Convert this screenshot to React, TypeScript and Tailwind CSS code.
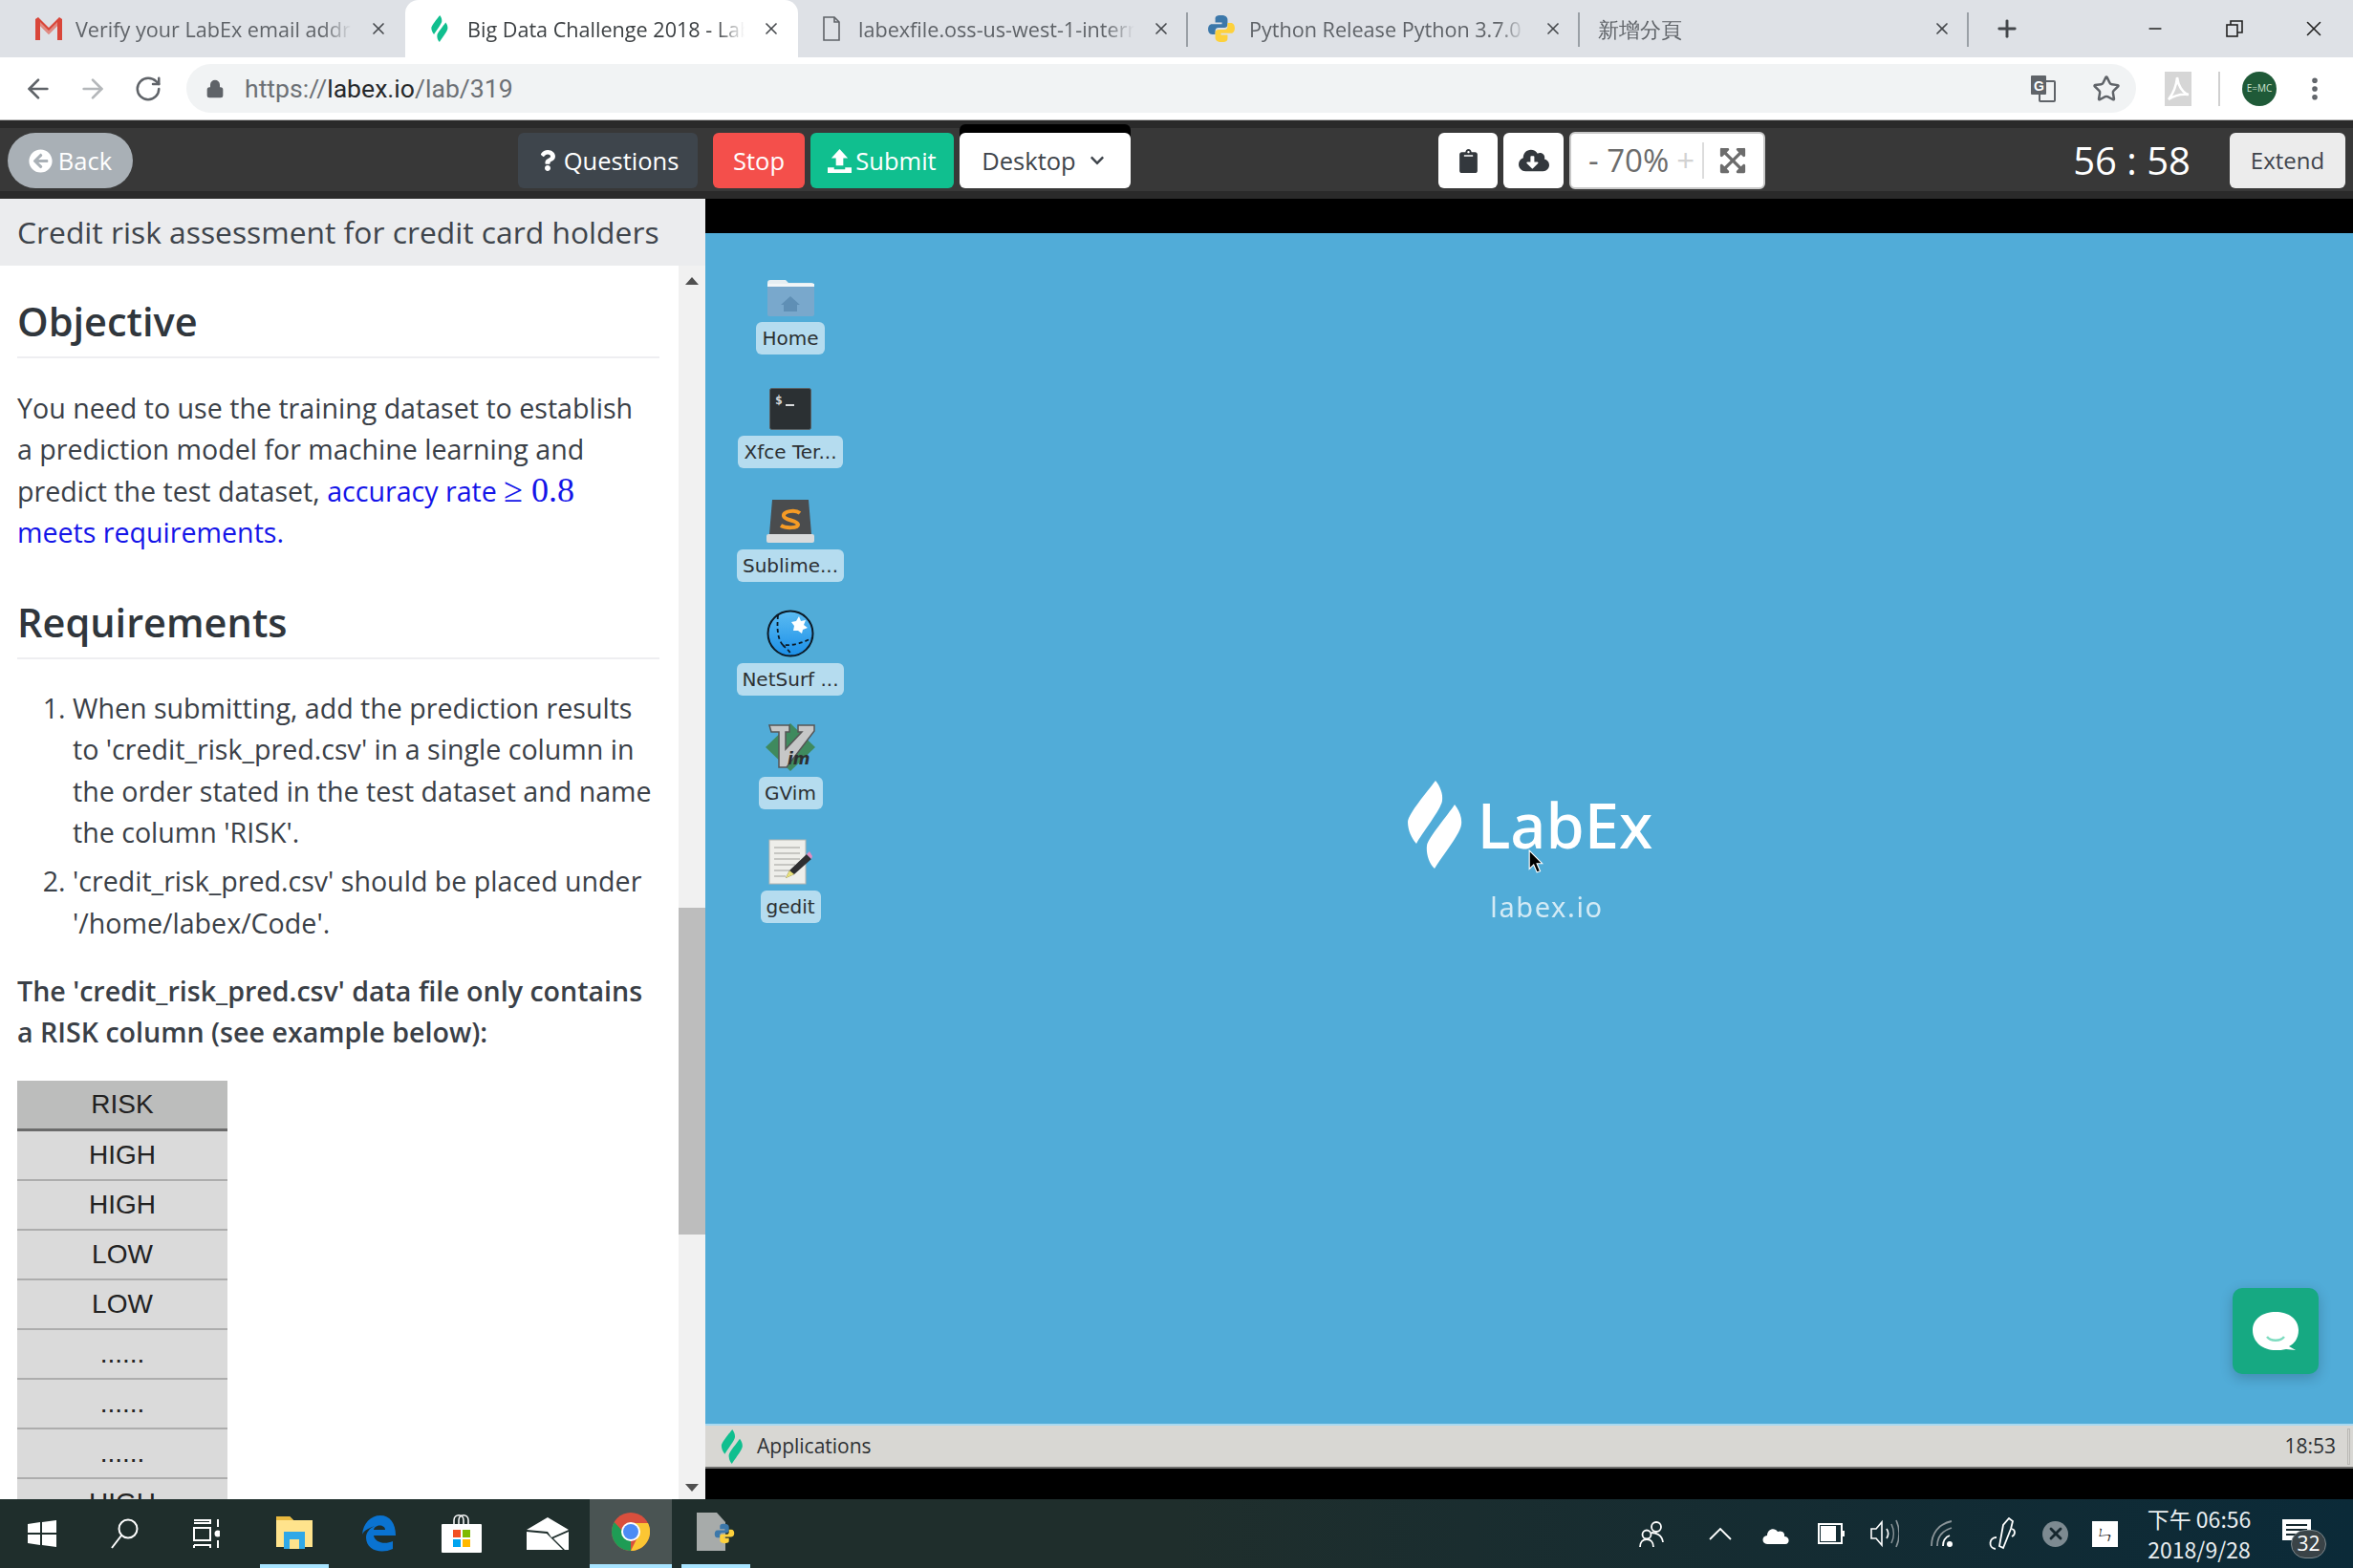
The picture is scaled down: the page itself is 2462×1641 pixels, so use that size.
import { ArrowLeft, ArrowRight, RotateCw, Lock, Star, EllipsisVertical, X, Plus, Minus } from "lucide-react";
import { FaArrowCircleLeft, FaQuestion, FaChevronDown, FaClipboard, FaCloudDownloadAlt, FaExpandArrowsAlt } from "react-icons/fa";

const LabexLeaf = ({ color, className }: { color: string; className: string }) => (
  <svg viewBox="0 0 57 92" className={className} fill={color}>
    <path d="M29 0C34 6 37 14 36 21C35 30 14 56 9 66C4 60 0 52 0 43C1 34 20 12 29 0Z" />
    <path d="M49 25C54 31 57 39 56 46C55 56 35 80 28 92C22 86 19 76 20 68C21 60 42 36 49 25Z" />
  </svg>
);

const GmailIcon = () => (
  <svg viewBox="0 0 28 24" className="w-[28px] h-[24px]">
    <path d="M0 2L3 0L14 11L25 0L28 2V24H23V9L14 18L5 9V24H0Z" fill="#d9463a" />
    <path d="M5 9L14 18L23 9V5L14 14L5 5Z" fill="#e8e0dd" opacity="0.45" />
  </svg>
);

const PageIcon = () => (
  <svg viewBox="0 0 20 26" className="w-[20px] h-[26px]" fill="none" stroke="#5f6368" strokeWidth="1.6">
    <path d="M2 1H13L18 6V25H2Z" />
    <path d="M13 1V6H18" />
  </svg>
);

const PythonIcon = ({ className }: { className: string }) => (
  <svg viewBox="0 0 28 28" className={className}>
    <path d="M14 1C8 1 8 3 8 5V8H14.5V9.5H5C2 9.5 1 12 1 14.5C1 17 2 19.5 5 19.5H8V16C8 14 9.5 13 11 13H17C18.5 13 20 12 20 10V5C20 3 18 1 14 1Z" fill="#3c78aa" />
    <path d="M14 27C20 27 20 25 20 23V20H13.5V18.5H23C26 18.5 27 16 27 13.500C27 11 26 8.500 23 8.500H20V12C20 14 18.500 15 17 15H11C9.500 15 8 16 8 18V23C8 25 10 27 14 27Z" fill="#fdd13c" />
  </svg>
);

type TabProps = {
  width: string;
  lead: string;
  icon?: React.ReactNode;
  title: string;
  active?: boolean;
  separator?: boolean;
};

const Tab = ({ width, lead, icon, title, active, separator }: TabProps) => (
  <div className={`${width} h-[60px] flex items-center shrink-0 relative ${active ? "bg-white rounded-t-[14px] text-[#3c4043]" : "text-[#5f6368]"}`}>
    <div className={`${lead} flex items-center shrink-0`}>{icon}</div>
    <span className="flex-1 overflow-hidden whitespace-nowrap pt-[2px] text-[21.600px] [mask-image:linear-gradient(to_left,transparent,black_30px)]">{title}</span>
    <X size={20} strokeWidth={2} className="mx-[18px] shrink-0 text-[#45484c]" />
    {separator && <div className="w-[2px] h-[36px] bg-[#9aa0a6] absolute right-0 top-[13px]" />}
  </div>
);

const Bar = ({ className, children }: { className: string; children: React.ReactNode }) => (
  <div className={`h-[58px] flex items-center justify-center shrink-0 text-[25.5px] ${className}`}>{children}</div>
);

const Heading = ({ children, className }: { children: React.ReactNode; className: string }) => (
  <h2 className={`h-[69px] pt-[2px] border-b-2 border-[#eeeef1] text-[41.500px] leading-[56px] font-semibold text-[#30363c] ${className}`}>{children}</h2>
);

const HomeIcon = () => (
  <svg viewBox="0 0 50 38" className="w-[50px] h-[38px]">
    <path d="M1 3C1 1 2 0 4 0H20L23 3H47C49 3 50 4 50 6V8H1Z" fill="#e6eef2" />
    <rect x="1" y="4" width="49" height="34" rx="2" fill="#79a8cc" />
    <rect x="1" y="4" width="49" height="3" fill="#f2f6f8" />
    <path d="M25 17L35 26H32V33H18V26H15Z" fill="#5f8fb5" />
  </svg>
);

const TerminalIcon = () => (
  <svg viewBox="0 0 44 44" className="w-[44px] h-[44px]">
    <rect x="0.500" y="0.500" width="43" height="43" rx="2" fill="#2b3033" stroke="#596165" />
    <text x="6" y="17" fontSize="13" fontWeight="700" fill="#d8dadb" fontFamily="DejaVu Sans Mono">$</text>
    <rect x="17" y="17" width="9" height="2" fill="#d8dadb" />
  </svg>
);

const SublimeIcon = () => (
  <svg viewBox="0 0 50 46" className="w-[50px] h-[46px]">
    <path d="M6 0H44L47 36H3Z" fill="#4a4c4e" />
    <rect x="0" y="36" width="50" height="9" rx="2" fill="#d9dbdc" />
    <path d="M35 14C30 10 17 12 18 17C19 22 32 21 33 26C33 30 20 30 15 27" fill="none" stroke="#f59b25" strokeWidth="4" />
  </svg>
);

const NetSurfIcon = () => (
  <svg viewBox="0 0 50 50" className="w-[50px] h-[50px]">
    <defs>
      <linearGradient id="globe" x1="0" y1="0" x2="0" y2="1">
        <stop offset="0" stopColor="#5cbcf2" />
        <stop offset="1" stopColor="#1b8fe8" />
      </linearGradient>
    </defs>
    <circle cx="25" cy="25" r="23.500" fill="url(#globe)" stroke="#0c1a26" strokeWidth="2" />
    <path d="M34 7L36 12L41 11L39 16L43 19L38 21L37 25L33 22L28 22L29 17L26 13L31 12Z" fill="#fff" />
    <path d="M12 6C11 18 11 30 17 37C26 38 38 35 47 30M17 37C22 42 25 44 26 48" fill="none" stroke="#0c1a26" strokeWidth="1.800" strokeDasharray="4 3" />
  </svg>
);

const VimIcon = () => (
  <svg viewBox="0 0 52 50" className="w-[52px] h-[50px]">
    <path d="M26 0L52 25L26 50L0 25Z" fill="#3f8a5e" />
    <path d="M4 2H25V9H21V27L38 9H34V2H51V8L22 46H14V9H6Z" fill="#c6c7c7" stroke="#555" strokeWidth="1.500" />
    <text x="23" y="43" fontSize="17" fontWeight="700" fontStyle="italic" fill="#2d2f30" fontFamily="DejaVu Sans">im</text>
  </svg>
);

const GeditIcon = () => (
  <svg viewBox="0 0 46 48" className="w-[46px] h-[48px]">
    <rect x="1" y="1" width="38" height="46" fill="#eeeeea" stroke="#b5b5b0" />
    <path d="M6 9H33M6 15H33M6 21H33M6 27H28M6 33H22M6 39H18" stroke="#b9b9b5" strokeWidth="1.500" />
    <path d="M18 41L22 33L40 16L45 21L27 37Z" fill="#2e2e30" />
    <path d="M18 41L22 33L27 37Z" fill="#e8e07a" />
    <path d="M40 16L43 13L46 18L45 21Z" fill="#e28cc0" />
  </svg>
);

const desktopIcons = [
  { label: "Home", icon: <HomeIcon />, width: "w-[72px]" },
  { label: "Xfce Ter...", icon: <TerminalIcon />, width: "w-[110px]" },
  { label: "Sublime...", icon: <SublimeIcon />, width: "w-[112px]" },
  { label: "NetSurf ...", icon: <NetSurfIcon />, width: "w-[112px]" },
  { label: "GVim", icon: <VimIcon />, width: "w-[67px]" },
  { label: "gedit", icon: <GeditIcon />, width: "w-[63px]" },
];

const tableRows = ["HIGH", "HIGH", "LOW", "LOW", "......", "......", "......", "HIGH"];

const WindowsLogo = () => (
  <svg viewBox="0 0 30 28" className="w-[30px] h-[28px]" fill="#fff">
    <path d="M0 4L13 2V13H0ZM15 2L30 0V13H15ZM0 15H13V26L0 24ZM15 15H30V28L15 26Z" />
  </svg>
);

const SearchIcon = () => (
  <svg viewBox="0 0 30 32" className="w-[30px] h-[32px]" fill="none" stroke="#fff" strokeWidth="2">
    <circle cx="19" cy="11" r="9.500" />
    <path d="M12 18L2 31" />
  </svg>
);

const TaskViewIcon = () => (
  <svg viewBox="0 0 28 32" className="w-[28px] h-[32px]" fill="none" stroke="#fff" strokeWidth="2">
    <path d="M1 2H18V5H1M1 28H18V31M1 28V31" />
    <rect x="1" y="10" width="17" height="13" />
    <path d="M26 1V9M26 23V31" />
    <circle cx="26" cy="16" r="2.500" fill="#fff" />
  </svg>
);

const ExplorerIcon = () => (
  <svg viewBox="0 0 38 36" className="w-[38px] h-[36px]">
    <path d="M0 2H14L18 6H38V34H0Z" fill="#ffe38c" />
    <path d="M0 2H14L18 6H0Z" fill="#e9b93f" />
    <path d="M8 18H30V36H24V26H14V36H8Z" fill="#2fa8e8" />
    <rect x="14" y="26" width="10" height="10" fill="#ffe38c" />
  </svg>
);

const EdgeIcon = () => (
  <svg viewBox="0 0 36 38" className="w-[36px] h-[38px]">
    <path d="M1 20C2 8 10 0 20 0C30 0 36 8 36 21H13C14 28 24 31 33 27V35C20 41 5 36 5 23C5 18 9 13 14 11C9 13 3 15 1 20ZM13 15H25C25 9 14 9 13 15Z" fill="#0a73d1" />
  </svg>
);

const StoreIcon = () => (
  <svg viewBox="0 0 42 40" className="w-[42px] h-[40px]">
    <rect x="0" y="10" width="42" height="30" rx="1" fill="#fff" />
    <path d="M13 12V6C13 -1 23 -1 23 6V12M18 12V6C18 -1 28 -1 28 6V12" fill="none" stroke="#fff" strokeWidth="1.500" />
    <rect x="12" y="16" width="8" height="8" fill="#f25022" />
    <rect x="22" y="16" width="8" height="8" fill="#7fba00" />
    <rect x="12" y="26" width="8" height="8" fill="#00a4ef" />
    <rect x="22" y="26" width="8" height="8" fill="#ffb900" />
  </svg>
);

const MailIcon = () => (
  <svg viewBox="0 0 44 34" className="w-[44px] h-[34px]">
    <path d="M0 13L22 0L44 13L26 21L22 15Z" fill="#fff" />
    <path d="M0 15L21 17L38 34H0ZM44 15V34H40L28 22Z" fill="#fff" />
  </svg>
);

const ChromeIcon = () => (
  <svg viewBox="0 0 40 40" className="w-[40px] h-[40px]">
    <circle cx="20" cy="20" r="20" fill="#d94f3d" />
    <path d="M20 40A20 20 0 0 1 2.700 10L12 20L20 30Z" fill="#1e9c55" />
    <path d="M20 40A20 20 0 0 0 38 11H20L28 24Z" fill="#fbc633" />
    <circle cx="20" cy="20" r="10" fill="#fff" />
    <circle cx="20" cy="20" r="8" fill="#4c8bf5" />
  </svg>
);

const PythonFileIcon = () => (
  <div className="relative w-[40px] h-[40px]">
    <div className="w-[30px] h-[40px] bg-[#c9cbcb] opacity-80 [clip-path:polygon(0_0,70%_0,100%_25%,100%_100%,0_100%)]" />
    <div className="absolute right-0 bottom-[4px]">
      <PythonIcon className="w-[22px] h-[28px]" />
    </div>
  </div>
);

export default function App() {
  return (
    <div className="w-[2462px] h-[1641px] flex flex-col overflow-hidden font-['Open_Sans',sans-serif]">
      {/* Browser tabs */}
      <div className="h-[60px] shrink-0 bg-[#dee1e6] flex items-center">
        <Tab width="w-[424px]" lead="w-[79px] pl-[37px]" icon={<GmailIcon />} title="Verify your LabEx email address" />
        <Tab width="w-[411px]" lead="w-[65px] pl-[27px]" active icon={<LabexLeaf color="#10bf8f" className="w-[18px] h-[28px]" />} title="Big Data Challenge 2018 - LabEx" />
        <Tab width="w-[408px]" lead="w-[63px] pl-[25px]" separator icon={<PageIcon />} title="labexfile.oss-us-west-1-internal" />
        <Tab width="w-[410px]" lead="w-[64px] pl-[20px]" separator icon={<PythonIcon className="w-[30px] h-[30px]" />} title="Python Release Python 3.7.0" />
        <Tab width="w-[407px]" lead="w-[19px]" separator title="新增分頁" />
        <Plus size={28} strokeWidth={2.500} className="ml-[26px] text-[#45484c]" />
        <Minus size={20} strokeWidth={2} className="ml-[131px] text-[#222]" />
        <svg viewBox="0 0 20 20" className="w-[20px] h-[20px] ml-[63px]" fill="none" stroke="#222" strokeWidth="1.600">
          <rect x="2" y="6" width="11" height="12" />
          <path d="M6 6V2H18V14H13" />
        </svg>
        <X size={26} strokeWidth={1.500} className="ml-[60px] text-[#222]" />
      </div>

      {/* Address bar */}
      <div className="h-[66px] shrink-0 bg-white border-b border-[#b8b8b8] flex items-center">
        <ArrowLeft size={32} strokeWidth={2} className="ml-[24px] text-[#5f6368]" />
        <ArrowRight size={32} strokeWidth={2} className="ml-[25px] text-[#b4b7ba]" />
        <RotateCw size={30} strokeWidth={2} className="ml-[27px] text-[#5f6368]" />
        <div className="ml-[25px] w-[2040px] h-[51px] rounded-full bg-[#f1f3f4] flex items-center">
          <Lock size={20} fill="#5f6368" strokeWidth={2} className="ml-[20px] text-[#5f6368]" />
          <span className="ml-[21px] text-[26.600px] text-[#6c7075] font-['Roboto',sans-serif]">
            https://<span className="text-[#25282b]">labex.io</span>/lab/319
          </span>
          <svg viewBox="0 0 26 30" className="w-[26px] h-[30px] ml-auto" fill="none">
            <rect x="9" y="7" width="16" height="21" rx="1" stroke="#5f6368" strokeWidth="2" />
            <rect x="0" y="1" width="16" height="20" rx="1" fill="#5f6368" />
            <text x="3" y="17" fontSize="14" fontWeight="700" fill="#fff" fontFamily="Liberation Sans">G</text>
          </svg>
          <Star size={30} strokeWidth={2} className="ml-[38px] mr-[16px] text-[#5f6368]" />
        </div>
        <svg viewBox="0 0 28 36" className="ml-[30px] w-[28px] h-[36px]">
          <rect width="28" height="36" fill="#d6d6d6" />
          <path d="M4 29C8 24 12 16 13 6C14 14 18 22 25 24C18 23 10 25 4 29Z" fill="none" stroke="#fff" strokeWidth="2.500" />
        </svg>
        <div className="ml-[28px] w-[2px] h-[36px] bg-[#d0d0d0]" />
        <div className="ml-[23px] w-[36px] h-[36px] rounded-full bg-[#1f5a38] flex items-center justify-center text-[10px] text-[#cfe5d2]">E=MC</div>
        <EllipsisVertical size={30} strokeWidth={2.500} className="ml-[25px] text-[#5f6368]" />
      </div>

      {/* LabEx toolbar */}
      <div className="h-[82px] shrink-0 bg-[#383838] border-y-8 border-[#2a2a2a] pt-[2px] flex items-center">
        <Bar className="ml-[8px] w-[131px] rounded-full bg-[#a9b0b6] text-white gap-[6px]">
          <FaArrowCircleLeft size={25} />
          Back
        </Bar>
        <Bar className="ml-[403px] w-[188px] rounded-[6px] bg-[#3e454c] text-white gap-[6px]">
          <FaQuestion size={22} />
          Questions
        </Bar>
        <Bar className="ml-[16px] w-[96px] rounded-[6px] bg-[#f44f4b] text-white">Stop</Bar>
        <Bar className="ml-[6px] w-[150px] rounded-[6px] bg-[#10bf8f] text-white gap-[4px]">
          <svg viewBox="0 0 26 26" className="w-[25px] h-[25px]" fill="#fff">
            <path d="M13 0L22 10H17V18H9V10H4ZM0 20H7V22H19V20H26V26H0Z" />
          </svg>
          Submit
        </Bar>
        <Bar className="ml-[6px] w-[179px] rounded-[6px] bg-white text-[#3f454c] gap-[14px] pr-[4px] shadow-[0_-9px_0_0_#000]">
          Desktop
          <FaChevronDown size={16} />
        </Bar>
        <Bar className="ml-[322px] w-[62px] rounded-[6px] bg-white text-[#33383d]">
          <FaClipboard size={25} />
        </Bar>
        <Bar className="ml-[6px] w-[63px] rounded-[6px] bg-white text-[#33383d]">
          <FaCloudDownloadAlt size={32} />
        </Bar>
        <div className="ml-[6px] w-[205px] h-[60px] rounded-[6px] bg-white border-2 border-[#c8c8c8] flex items-center text-[#6c6c6c] text-[33px]">
          <span className="ml-[18px]">- 70%</span>
          <span className="ml-[8px] text-[#d2d2d2]">+</span>
          <div className="ml-[8px] w-[2px] h-[38px] bg-[#dcdcdc]" />
          <FaExpandArrowsAlt size={30} className="ml-[15px] text-[#6c6c6c]" />
        </div>
        <span className="ml-auto mr-[-1px] text-white text-[40px]">56 : 58</span>
        <Bar className="ml-[42px] mr-[8px] w-[121px] rounded-[6px] bg-[#ececec] text-[#3f454c] !text-[24px]">Extend</Bar>
      </div>

      {/* Main */}
      <div className="flex-1 min-h-0 flex">
        {/* Lab instructions */}
        <div className="w-[738px] shrink-0 flex flex-col bg-white">
          <div className="h-[70px] shrink-0 bg-[#ebecee] pl-[18px] flex items-center text-[31.800px] text-[#3e444b]">
            Credit risk assessment for credit card holders
          </div>
          <div className="flex-1 min-h-0 flex">
            <div className="flex-1 min-w-0 overflow-hidden pl-[18px] pr-[20px] text-[28.600px] leading-[43.3px] text-[#3a4047]">
              <Heading className="mt-[28px]">Objective</Heading>
              <p className="mt-[30px]">
                You need to use the training dataset to establish
                <br />
                a prediction model for machine learning and
                <br />
                predict the test dataset,{" "}
                <span className="text-[#1414e8]">
                  accuracy rate <span className="font-['Liberation_Serif',serif] text-[36px]">≥ 0.8</span>
                  <br />
                  meets requirements.
                </span>
              </p>
              <Heading className="mt-[43px]">Requirements</Heading>
              <ol className="mt-[29px] pl-[58px] list-decimal">
                <li>When submitting, add the prediction results to 'credit_risk_pred.csv' in a single column in the order stated in the test dataset and name the column 'RISK'.</li>
                <li className="mt-[8px]">'credit_risk_pred.csv' should be placed under '/home/labex/Code'.</li>
              </ol>
              <p className="mt-[28px] font-semibold">
                The 'credit_risk_pred.csv' data file only contains
                <br />
                a RISK column (see example below):
              </p>
              <table className="mt-[29px] w-[220px] font-['Liberation_Sans',sans-serif] text-[28px] text-[#222]">
                <thead>
                  <tr className="h-[52px] bg-[#bcbdbc] border-b-[3px] border-[#6b6b6b]">
                    <th className="font-normal text-center p-0">RISK</th>
                  </tr>
                </thead>
                <tbody>
                  {tableRows.map((row, i) => (
                    <tr key={i} className="h-[52px] bg-[#dadada] border-b-2 border-[#adadad]">
                      <td className="text-center p-0">{row}</td>
                    </tr>
                  ))}
                </tbody>
              </table>
            </div>
            {/* Scrollbar */}
            <div className="w-[28px] shrink-0 bg-[#f1f1f1] flex flex-col items-center pt-[12px] pb-[8px]">
              <div className="w-0 h-0 border-x-[7px] border-x-transparent border-b-[8px] border-b-[#505050]" />
              <div className="mt-[652px] w-full h-[342px] bg-[#bdbdbd]" />
              <div className="mt-auto w-0 h-0 border-x-[7px] border-x-transparent border-t-[8px] border-t-[#505050]" />
            </div>
          </div>
        </div>

        {/* Remote desktop */}
        <div className="flex-1 min-w-0 flex flex-col bg-black pt-[36px] pb-[32px]">
          <div className="flex-1 min-h-0 relative bg-[#51acd8] border-b-2 border-[#a8d8ef]">
            <div className="w-[178px] pt-[29px] flex flex-col items-center gap-[21px] font-['DejaVu_Sans',sans-serif]">
              {desktopIcons.map((item) => (
                <div key={item.label} className="flex flex-col items-center gap-[6px]">
                  <div className="h-[58px] flex items-end">{item.icon}</div>
                  <div className={`${item.width} h-[34px] rounded-[6px] bg-[#b5dcef] text-[#2c3033] text-[20px] flex items-center justify-center whitespace-nowrap`}>
                    {item.label}
                  </div>
                </div>
              ))}
            </div>
            {/* Wallpaper logo */}
            <div className="absolute inset-0 flex flex-col items-center justify-center pt-[52px] text-white font-['Noto_Sans',sans-serif]">
              <div className="ml-[2px] flex items-center gap-[16px]">
                <LabexLeaf color="#fff" className="w-[57px] h-[92px]" />
                <span className="text-[65px] leading-[92px] font-medium">LabEx</span>
              </div>
              <span className="mt-[20px] ml-[37px] text-[29px] leading-[40px] tracking-[1.600px] opacity-75">labex.io</span>
            </div>
            {/* Pointer */}
            <svg viewBox="0 0 14 22" className="absolute left-[861px] top-[645px] w-[16px] h-[25px]">
              <path d="M1 1V18L5 14L8 21L11 20L8 13H13Z" fill="#000" stroke="#fff" strokeWidth="1" />
            </svg>
            {/* Chat button */}
            <div className="absolute right-[36px] bottom-[52px] w-[90px] h-[90px] rounded-[10px] bg-[#16a982] shadow-[0_4px_14px_rgba(0,0,0,0.2)] flex items-center justify-center">
              <svg viewBox="0 0 50 42" className="w-[50px] h-[42px]">
                <path d="M25 1C38 1 49 8 49 20C49 29 44 35 39 37L46 41L36 40C32 41 29 41 25 41C12 41 1 33 1 20C1 8 12 1 25 1Z" fill="#fff" />
                <path d="M16 27C20 32 30 32 34 27" fill="none" stroke="#7fdcc0" strokeWidth="2.500" />
              </svg>
            </div>
          </div>
          {/* Xfce panel */}
          <div className="h-[45px] shrink-0 bg-[#d8d7d3] border-b-2 border-[#6f6f6d] flex items-center text-[#2e3133] text-[21px]">
            <LabexLeaf color="#10bf8f" className="ml-[16px] w-[24px] h-[36px]" />
            <span className="ml-[14px]">Applications</span>
            <span className="ml-auto mr-[12px]">18:53</span>
            <div className="mr-[3px] w-[3px] h-[38px] border border-[#b9b8b4]" />
          </div>
        </div>
      </div>

      {/* Windows taskbar */}
      <div className="h-[72px] shrink-0 flex items-stretch bg-[linear-gradient(to_right,#1f2e2c,#1f2e2c_50%,#0b2a38)]">
        <div className="ml-[29px] self-center"><WindowsLogo /></div>
        <div className="ml-[56px] self-center"><SearchIcon /></div>
        <div className="ml-[57px] self-center"><TaskViewIcon /></div>
        <div className="ml-[42px] w-[72px] flex items-center justify-center border-b-4 border-[#a8e4ff]"><ExplorerIcon /></div>
        <div className="ml-[34px] self-center"><EdgeIcon /></div>
        <div className="ml-[48px] self-center"><StoreIcon /></div>
        <div className="ml-[47px] self-center"><MailIcon /></div>
        <div className="ml-[22px] w-[86px] bg-[#4a5453] flex items-center justify-center border-b-4 border-[#a8e4ff]"><ChromeIcon /></div>
        <div className="ml-[10px] w-[72px] flex items-center justify-center border-b-4 border-[#a8e4ff]"><PythonFileIcon /></div>

        <div className="ml-auto flex items-center text-white">
          <svg viewBox="0 0 26 30" className="w-[26px] h-[30px]" fill="none" stroke="#fff" strokeWidth="1.800">
            <circle cx="18" cy="8" r="5" />
            <circle cx="8" cy="16" r="4.500" />
            <path d="M13 14C17 14 24 16 25 24M1 29C1 24 4 21 8 21C12 21 15 24 15 29" />
          </svg>
          <svg viewBox="0 0 24 14" className="ml-[47px] w-[24px] h-[14px]" fill="none" stroke="#fff" strokeWidth="1.800">
            <path d="M1 13L12 2L23 13" />
          </svg>
          <svg viewBox="0 0 30 22" className="ml-[31px] w-[30px] h-[22px]" fill="#fff">
            <path d="M6 22C0 22 0 13 6 13C6 6 14 4 17 9C22 7 25 11 24 14C30 14 30 22 25 22Z" />
          </svg>
          <svg viewBox="0 0 28 22" className="ml-[29px] w-[28px] h-[22px]" fill="none" stroke="#fff" strokeWidth="2">
            <rect x="1" y="1" width="24" height="20" />
            <rect x="4" y="4" width="14" height="14" fill="#fff" />
            <path d="M27 8V14" />
          </svg>
          <svg viewBox="0 0 30 32" className="ml-[27px] w-[30px] h-[32px]" fill="none" stroke="#fff" strokeWidth="1.600">
            <path d="M1 11H6L12 4V28L6 21H1Z" />
            <path d="M17 11C19 14 19 18 17 21" />
            <path d="M22 6C25 12 25 20 22 26M27 2C31 11 31 21 27 30" stroke="#8b9599" />
          </svg>
          <svg viewBox="0 0 24 30" className="ml-[33px] w-[24px] h-[30px]" fill="none" stroke="#8b9599" strokeWidth="1.800">
            <path d="M1 28C1 15 8 5 22 2M7 28C7 19 12 12 22 9" />
            <path d="M13 28C13 24 15 19 20 17" stroke="#fff" />
            <circle cx="20" cy="26" r="3" fill="#fff" stroke="none" />
          </svg>
          <svg viewBox="0 0 30 34" className="ml-[36px] w-[30px] h-[34px]" fill="none" stroke="#fff" strokeWidth="1.800">
            <path d="M12 30L16 8L22 1L26 4L24 12L16 32Z" />
            <path d="M25 12C29 13 29 18 25 20M9 21C1 21 0 32 8 33" />
          </svg>
          <div className="ml-[27px] w-[27px] h-[27px] rounded-full bg-[#7d8a91] flex items-center justify-center">
            <X size={20} strokeWidth={3.500} className="text-[#16272e]" />
          </div>
          <div className="ml-[25px] w-[27px] h-[27px] bg-white text-black text-[18px] flex items-center justify-center">ㄣ</div>
          <div className="ml-[33px] w-[104px] flex flex-col items-center text-[23px] leading-[32px] font-['Noto_Sans_CJK_TC',sans-serif] text-[#e9eef0]">
            <span className="whitespace-nowrap">下午 06:56</span>
            <span>2018/9/28</span>
          </div>
          <div className="relative ml-[35px] mr-[44px] w-[30px] h-[22px] -mt-[8px]">
            <div className="w-[30px] h-[22px] bg-white flex flex-col justify-center gap-[3px] px-[4px]">
              <div className="h-[2px] bg-[#16272e]" />
              <div className="h-[2px] bg-[#16272e]" />
              <div className="h-[2px] bg-[#16272e]" />
            </div>
            <div className="absolute left-[9px] top-[11px] w-[37px] h-[30px] rounded-full bg-[#3a4347] border border-[#7c878c] flex items-center justify-center text-[21px] text-white">32</div>
          </div>
        </div>
      </div>
    </div>
  );
}
